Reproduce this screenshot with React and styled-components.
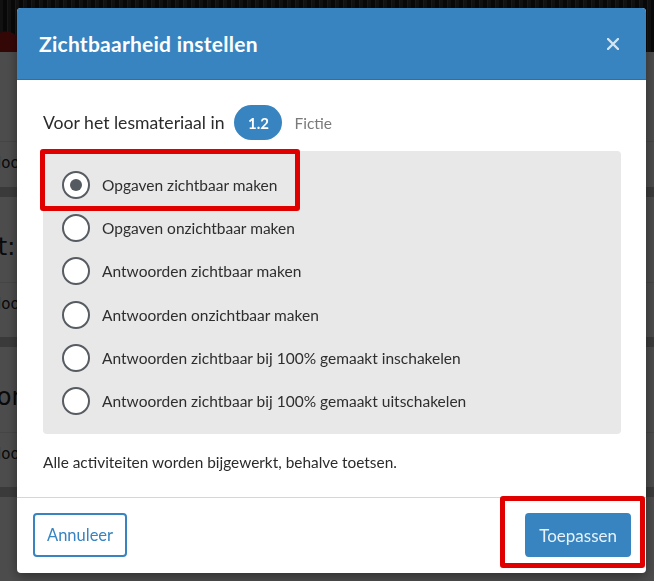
import React, { useState } from "react";
import styled, { createGlobalStyle } from "styled-components";

const Global = createGlobalStyle`
  html, body { margin: 0; padding: 0; }
  body {
    font-family: Lato, "Open Sans", Arial, sans-serif;
    background: #ffffff;
    width: 654px;
    height: 581px;
    overflow: hidden;
  }
  * { box-sizing: border-box; }
`;

/* ---------- background page ---------- */
const Page = styled.div`
  width: 654px;
  height: 581px;
  background: #fdfdfd;
  display: flex;
  flex-direction: column;
  overflow: hidden;
`;

const Hero = styled.div`
  height: 52px;
  flex: none;
  background:
    radial-gradient(circle at 6px 46px, #b01818 0 14px, transparent 15px),
    repeating-linear-gradient(90deg, #3a3a3a 0 3px, #1c1c1c 3px 7px, #555 7px 8px);
`;

const Section = styled.section`
  flex: none;
  display: flex;
  flex-direction: column;
  background: #ffffff;
  border-bottom: 10px solid #c4c4c4;
`;

const SectionTitle = styled.h2`
  margin: 0;
  height: ${(p) => p.$height}px;
  display: flex;
  align-items: center;
  padding-top: 14px;
  font-family: "DejaVu Sans", sans-serif;
  font-weight: 400;
  font-size: 24px;
  color: #222;
  text-indent: ${(p) => p.$indent}px;
  white-space: nowrap;
  border-bottom: 1px solid #e6e6e6;
`;

const SectionRow = styled.div`
  height: ${(p) => p.$height}px;
  display: flex;
  align-items: center;
  padding-bottom: ${(p) => p.$height - 42}px;
  font-family: "DejaVu Sans", sans-serif;
  font-size: 15px;
  color: #222;
  text-indent: -10px;
  white-space: nowrap;
`;

const Overlay = styled.div`
  position: fixed;
  inset: 0;
  background: rgba(0, 0, 0, 0.7);
  display: flex;
  align-items: flex-start;
  justify-content: flex-start;
  padding: 8px 0 0 17px;
`;

/* ---------- modal ---------- */
const Modal = styled.div`
  position: relative;
  width: 629px;
  height: 565px;
  background: #ffffff;
  border-radius: 4px;
  display: flex;
  flex-direction: column;
  box-shadow: 0 3px 12px rgba(0, 0, 0, 0.4);
`;

const Header = styled.header`
  height: 72px;
  flex: none;
  background: #3784c0;
  border-bottom: 1px solid #2e70a5;
  border-radius: 4px 4px 0 0;
  display: flex;
  align-items: center;
  justify-content: space-between;
  padding: 0 26px 0 22px;
`;

const Title = styled.h1`
  margin: 0;
  font-size: 21px;
  font-weight: 700;
  color: #ffffff;
  letter-spacing: 0.25px;
`;

const CloseButton = styled.button`
  border: 0;
  background: none;
  padding: 0;
  width: 14px;
  height: 14px;
  display: flex;
  align-items: center;
  justify-content: center;
  cursor: pointer;
`;

const Body = styled.div`
  flex: 1;
  display: flex;
  flex-direction: column;
  padding: 25px 25px 0 26px;
  border-bottom: 1px solid #d6d6d6;
`;

const ScopeRow = styled.div`
  display: flex;
  align-items: center;
  height: 35px;
  font-size: 17.6px;
  color: #2b2b2b;
`;

const Badge = styled.span`
  margin-left: 10px;
  width: 48px;
  height: 35px;
  border-radius: 18px;
  background: #3784c0;
  color: #ffffff;
  font-weight: 700;
  font-size: 15px;
  display: flex;
  align-items: center;
  justify-content: center;
`;

const Muted = styled.span`
  margin-left: 12px;
  color: #7a7a7a;
  font-size: 15.5px;
`;

const OptionsBox = styled.div`
  margin-top: 11px;
  background: #e8e8e8;
  border-radius: 4px;
  padding: 12px 19px 11px;
  display: flex;
  flex-direction: column;
`;

const OptionRow = styled.label`
  height: 43.3px;
  display: flex;
  align-items: center;
  gap: 12px;
  font-size: 15.5px;
  color: #2e2e2e;
  cursor: pointer;
`;

const RadioCircle = styled.span`
  width: 28px;
  height: 28px;
  flex: none;
  border-radius: 50%;
  border: 2.5px solid #575c63;
  background: #ffffff;
  display: flex;
  align-items: center;
  justify-content: center;

  &::after {
    content: "";
    width: 12px;
    height: 12px;
    border-radius: 50%;
    background: #555a61;
    display: ${(p) => (p.$checked ? "block" : "none")};
  }
`;

const Note = styled.p`
  margin: 19px 0 0;
  font-size: 15.4px;
  color: #2b2b2b;
  line-height: 18px;
`;

const Footer = styled.footer`
  flex: none;
  height: 75px;
  display: flex;
  align-items: flex-start;
  justify-content: space-between;
  padding: 15px 15px 0 16px;
`;

const Button = styled.button`
  height: 44px;
  padding: 0 12px;
  border-radius: 4px;
  font-family: inherit;
  font-size: ${(p) => (p.$primary ? 17 : 16.5)}px;
  cursor: pointer;
  border: 2px solid #3784c0;
  background: ${(p) => (p.$primary ? "#3784c0" : "#ffffff")};
  color: ${(p) => (p.$primary ? "#e8f1f8" : "#3784c0")};
`;

const Annotation = styled.div`
  position: absolute;
  left: ${(p) => p.$left}px;
  top: ${(p) => p.$top}px;
  width: ${(p) => p.$width}px;
  height: ${(p) => p.$height}px;
  border: 5px solid #e10000;
  border-radius: 3px;
  pointer-events: none;
`;

const options = [
  "Opgaven zichtbaar maken",
  "Opgaven onzichtbaar maken",
  "Antwoorden zichtbaar maken",
  "Antwoorden onzichtbaar maken",
  "Antwoorden zichtbaar bij 100% gemaakt inschakelen",
  "Antwoorden zichtbaar bij 100% gemaakt uitschakelen",
];

export default function App() {
  const [selected, setSelected] = useState(0);
  return (
    <>
      <Global />
      <Page>
        <Hero />
        <Section>
          <SectionTitle $height={90} $indent={40}>Lesstof</SectionTitle>
          <SectionRow $height={45}>Hoofdstuk 1</SectionRow>
        </Section>
        <Section>
          <SectionTitle $height={86} $indent={-54}>Tekst: Fictie lezen</SectionTitle>
          <SectionRow $height={54}>Hoofdstuk 1 · Paragraaf 2</SectionRow>
        </Section>
        <Section>
          <SectionTitle $height={86} $indent={-29}>Bronnen</SectionTitle>
          <SectionRow $height={54}>Hoofdstuk 1 · Paragraaf 3</SectionRow>
        </Section>
      </Page>
      <Overlay>
        <Modal role="dialog" aria-label="Zichtbaarheid instellen">
          <Header>
            <Title>Zichtbaarheid instellen</Title>
            <CloseButton aria-label="Sluiten">
              <svg width="12" height="12" viewBox="0 0 12 12">
                <path
                  d="M1 1 L11 11 M11 1 L1 11"
                  stroke="#d4e4f1"
                  strokeWidth="2.4"
                  strokeLinecap="round"
                />
              </svg>
            </CloseButton>
          </Header>
          <Body>
            <ScopeRow>
              Voor het lesmateriaal in
              <Badge>1.2</Badge>
              <Muted>Fictie</Muted>
            </ScopeRow>
            <OptionsBox>
              {options.map((o, i) => (
                <OptionRow key={o} onClick={() => setSelected(i)}>
                  <RadioCircle $checked={selected === i} />
                  {o}
                </OptionRow>
              ))}
            </OptionsBox>
            <Note>Alle activiteiten worden bijgewerkt, behalve toetsen.</Note>
          </Body>
          <Footer>
            <Button>Annuleer</Button>
            <Button $primary>Toepassen</Button>
          </Footer>
          <Annotation $left={23} $top={141} $width={260} $height={62} />
          <Annotation $left={483} $top={488} $width={145} $height={72} />
        </Modal>
      </Overlay>
    </>
  );
}
